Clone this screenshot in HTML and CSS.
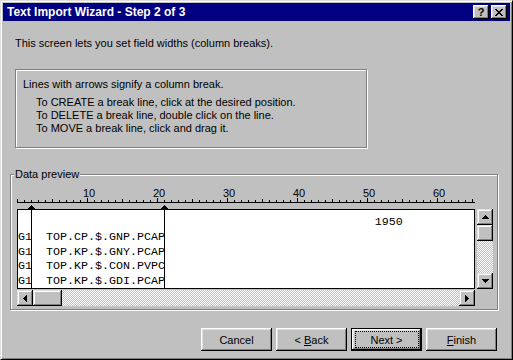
FILE: index.html
```html
<!DOCTYPE html>
<html lang="en">
  <head>
    <meta charset="UTF-8" />
    <title>Text Import Wizard - Step 2 of 3</title>
    <link rel="stylesheet" href="styles.css">
  </head>
  <body>
    <!-- dialog window -->
    <div class="window">
      <div class="titlebar">
        <span class="title">Text Import Wizard - Step 2 of 3</span>
        <div class="title-buttons">
          <button class="tb-btn tb-help">?</button>
          <button class="tb-btn">
            <svg width="8" height="7" viewBox="0 0 8 7">
              <path d="M0 0h2v1H0z M6 0h2v1H6z M1 1h2v1H1z M5 1h2v1H5z M2 2h4v1H2z M3 3h2v1H3z M2 4h4v1H2z M1 5h2v1H1z M5 5h2v1H5z M0 6h2v1H0z M6 6h2v1H6z" />
            </svg>
          </button>
        </div>
      </div>

      <div class="body">
        <p class="intro">This screen lets you set field widths (column breaks).</p>

        <div class="info">
          <p>Lines with arrows signify a column break.</p>
          <ul>
            <li>To CREATE a break line, click at the desired position.</li>
            <li>To DELETE a break line, double click on the line.</li>
            <li>To MOVE a break line, click and drag it.</li>
          </ul>
        </div>

        <!-- data preview group -->
        <div class="group">
          <span class="group-label">Data preview</span>

          <svg class="ruler" width="458" height="23" viewBox="0 0 458 23">
            <defs>
              <pattern id="tick" width="7" height="2" patternUnits="userSpaceOnUse">
                <rect width="1" height="2" />
              </pattern>
            </defs>
            <rect x="0" y="14" width="456" height="2" fill="url(#tick)" />
            <rect x="0" y="16" width="458" height="1" />
            <!-- ticks every 5 -->
            <rect x="0" y="13" width="1" height="3" />
            <rect x="35" y="13" width="1" height="3" />
            <rect x="105" y="13" width="1" height="3" />
            <rect x="175" y="13" width="1" height="3" />
            <rect x="245" y="13" width="1" height="3" />
            <rect x="315" y="13" width="1" height="3" />
            <rect x="385" y="13" width="1" height="3" />
            <rect x="455" y="13" width="1" height="3" />
            <!-- ticks every 10 -->
            <rect x="70" y="12" width="1" height="4" />
            <rect x="140" y="12" width="1" height="4" />
            <rect x="210" y="12" width="1" height="4" />
            <rect x="280" y="12" width="1" height="4" />
            <rect x="350" y="12" width="1" height="4" />
            <rect x="420" y="12" width="1" height="4" />
            <text x="72" y="11">10</text>
            <text x="142" y="11">20</text>
            <text x="212" y="11">30</text>
            <text x="282" y="11">40</text>
            <text x="352" y="11">50</text>
            <text x="422" y="11">60</text>
            <!-- break arrows -->
            <g>
              <rect x="14" y="19" width="1" height="4" />
              <rect x="13" y="20" width="3" height="1" />
              <rect x="12" y="21" width="5" height="1" />
              <rect x="11" y="22" width="7" height="1" />
              <rect x="147" y="19" width="1" height="4" />
              <rect x="146" y="20" width="3" height="1" />
              <rect x="145" y="21" width="5" height="1" />
              <rect x="144" y="22" width="7" height="1" />
            </g>
          </svg>

          <div class="preview">
            <div class="data">
              <div class="row">                                                   1950</div>
              <div class="row">G1  TOP.CP.$.GNP.PCAP</div>
              <div class="row">G1  TOP.KP.$.GNY.PCAP</div>
              <div class="row">G1  TOP.KP.$.CON.PVPC</div>
              <div class="row">G1  TOP.KP.$.GDI.PCAP</div>
              <span class="break break-1"></span>
              <span class="break break-2"></span>
            </div>

            <div class="vscroll">
              <div class="sb-btn">
                <svg width="7" height="4" viewBox="0 0 7 4"><path d="M3 0h1v1h1v1h1v1h1v1H0V3h1V2h1V1h1z" /></svg>
              </div>
              <div class="sb-thumb"></div>
              <div class="sb-track"></div>
              <div class="sb-btn">
                <svg width="7" height="4" viewBox="0 0 7 4"><path d="M0 0h7v1h-1v1h-1v1h-1v1h-1V3H2V2H1V1H0z" /></svg>
              </div>
            </div>

            <div class="hscroll">
              <div class="sb-btn">
                <svg width="4" height="7" viewBox="0 0 4 7"><path d="M3 0h1v7H3V6H2V5H1V4H0V3h1V2h1V1h1z" /></svg>
              </div>
              <div class="sb-thumb sb-thumb-h"></div>
              <div class="sb-track"></div>
              <div class="sb-btn">
                <svg width="4" height="7" viewBox="0 0 4 7"><path d="M0 0h1v1h1v1h1v1h1v1H3v1H2v1H1v1H0z" /></svg>
              </div>
            </div>
          </div>
        </div>

        <!-- wizard buttons -->
        <div class="actions">
          <button class="btn">Cancel</button>
          <button class="btn">&lt; <u>B</u>ack</button>
          <button class="btn btn-default">Next &gt;</button>
          <button class="btn"><u>F</u>inish</button>
        </div>
      </div>
    </div>
  </body>
</html>
```

FILE: styles.css
```css
* {
  box-sizing: border-box;
}

body {
  margin: 0;
  background: #c0c0c0;
  font-family: "Liberation Sans", Arial, sans-serif;
  font-size: 11px;
  color: #000;
}

.window {
  width: 513px;
  height: 360px;
  padding: 2px;
  background: #c0c0c0;
  border: 1px solid;
  border-color: #dfdfdf #000 #000 #dfdfdf;
  box-shadow: inset 1px 1px #fff, inset -1px -1px #808080;
}

/* title bar */
.titlebar {
  height: 18px;
  display: flex;
  align-items: center;
  padding: 0 3px 0 4px;
  background: #000080;
  color: #fff;
}

.title {
  flex: 1;
  font-size: 12px;
  font-weight: bold;
  line-height: 18px;
}

.title-buttons {
  display: flex;
  gap: 2px;
}

.tb-btn {
  width: 16px;
  height: 14px;
  padding: 0;
  border: none;
  display: flex;
  align-items: center;
  justify-content: center;
  background: #c0c0c0;
  box-shadow: inset -1px -1px #000, inset 1px 1px #fff, inset -2px -2px #808080, inset 2px 2px #dfdfdf;
}

.tb-help {
  font-family: "Liberation Sans", Arial, sans-serif;
  font-size: 11px;
  font-weight: bold;
  line-height: 14px;
  color: #000;
}

/* dialog body */
.body {
  padding: 16px 12px 0 7px;
}

.intro {
  margin: 0 0 0 5px;
  line-height: 13px;
}

.info {
  width: 352px;
  height: 79px;
  margin: 19px 0 0 5px;
  padding: 8px 0 0 7px;
  border: 1px solid #808080;
  box-shadow: 1px 1px #fff, inset 1px 1px #fff;
}

.info p {
  margin: 0;
  line-height: 13px;
}

.info ul {
  list-style: none;
  margin: 5px 0 0 13px;
  padding: 0;
}

.info li {
  line-height: 13px;
}

/* data preview */
.group {
  position: relative;
  width: 488px;
  margin-top: 26px;
  padding: 11px 4px 3px 6px;
  border: 1px solid #808080;
  box-shadow: 1px 1px #fff, inset 1px 1px #fff;
}

.group-label {
  position: absolute;
  top: -7px;
  left: 3px;
  padding: 0 1px;
  line-height: 13px;
  background: #c0c0c0;
}

.ruler {
  display: block;
}

.ruler text {
  font-family: "Liberation Sans", Arial, sans-serif;
  font-size: 11px;
  text-anchor: middle;
}

.preview {
  display: grid;
  grid-template-columns: 458px 16px;
  grid-template-rows: 80px 16px;
  column-gap: 2px;
  row-gap: 1px;
}

.data {
  position: relative;
  overflow: hidden;
  padding-top: 5px;
  border: 1px solid #000;
  background: #fff;
  font-family: "Liberation Mono", "Courier New", monospace;
  font-size: 11.667px;
  line-height: 14.75px;
}

.row {
  white-space: pre;
}

.break {
  position: absolute;
  top: 0;
  bottom: 0;
  width: 1px;
  background: #000;
}

.break-1 {
  left: 13px;
}

.break-2 {
  left: 146px;
}

.vscroll {
  display: flex;
  flex-direction: column;
}

.hscroll {
  display: flex;
}

.sb-btn,
.sb-thumb {
  width: 16px;
  height: 16px;
  background: #c0c0c0;
  box-shadow: inset -1px -1px #000, inset 1px 1px #dfdfdf, inset -2px -2px #808080, inset 2px 2px #fff;
}

.sb-btn {
  display: flex;
  align-items: center;
  justify-content: center;
}

.sb-thumb-h {
  width: 29px;
}

.sb-track {
  flex: 1;
  background: repeating-conic-gradient(#c0c0c0 0 25%, #fff 0 50%) 0 0 / 2px 2px;
}

/* wizard buttons */
.actions {
  display: flex;
  justify-content: flex-end;
  gap: 4px;
  margin-top: 18px;
  padding-right: 1px;
}

.btn {
  position: relative;
  width: 71px;
  height: 23px;
  padding: 0;
  border: none;
  background: #c0c0c0;
  font-family: "Liberation Sans", Arial, sans-serif;
  font-size: 11px;
  color: #000;
  box-shadow: inset -1px -1px #000, inset 1px 1px #fff, inset -2px -2px #808080, inset 2px 2px #dfdfdf;
}

.btn-default {
  box-shadow: inset -2px -2px #000, inset 1px 1px #000, inset 2px 2px #fff, inset -3px -3px #808080, inset 3px 3px #dfdfdf;
}

.btn-default::after {
  content: "";
  position: absolute;
  top: 3px;
  right: 3px;
  bottom: 3px;
  left: 4px;
  border: 1px dotted #000;
}
```
